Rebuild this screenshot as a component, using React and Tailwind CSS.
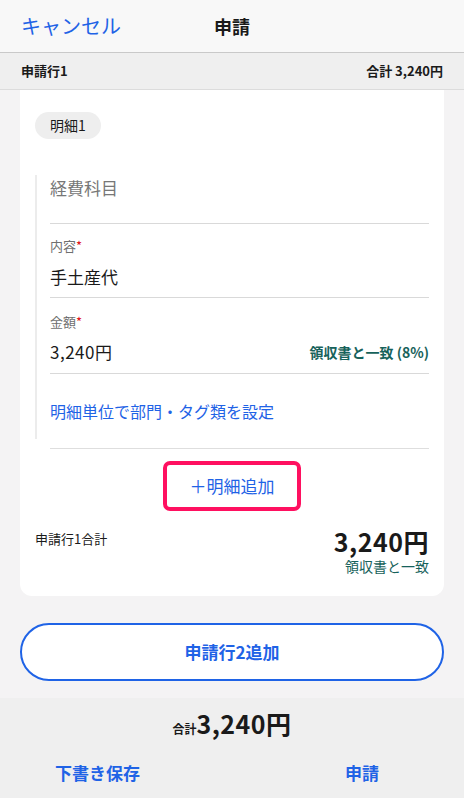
const FONT = { fontFamily: '"Noto Sans CJK JP", "Noto Sans", sans-serif' }

function Field({ label, required, children, className = "" }) {
  return (
    <div className={`border-b border-[#d9d9d9] ${className}`}>
      {label && (
        <p className="text-[13px] leading-none text-[#6f6f6f]">
          {label}
          {required && <span className="text-[#e0101a]">*</span>}
        </p>
      )}
      {children}
    </div>
  )
}

export default function App() {
  return (
    <div style={FONT} className="flex h-[798px] w-[464px] flex-col overflow-hidden bg-[#f4f3f4] text-[#1a1a1a]">
      <header className="relative flex h-[53px] shrink-0 items-center border-b border-[#c9c9c9] bg-[#f8f8f8] px-[21px]">
        <button type="button" className="text-[20px] text-[#1f63e6]">キャンセル</button>
        <h1 className="absolute left-1/2 -translate-x-1/2 text-[18px] font-bold">申請</h1>
      </header>

      <div className="flex h-[37px] shrink-0 items-center justify-between border-b border-[#dcdcdc] bg-[#efefef] px-[21px] text-[13px] font-bold">
        <span>申請行1</span>
        <span>合計 3,240円</span>
      </div>

      <div className="mx-[20px] shrink-0 rounded-b-[12px] bg-white pb-[20px] pl-[15px] pr-[15px] pt-[22px]">
        <span className="inline-flex h-[27px] items-center rounded-full bg-[#eeeeee] px-[15px] text-[14px]">明細1</span>

        <div className="mt-[36px] border-l-2 border-[#ececec] pl-[13px]">
          <Field className="h-[49px] pt-[1px]">
            <p className="text-[17px] leading-[24px] text-[#777777]">経費科目</p>
          </Field>
          <Field label="内容" required className="h-[74px] pt-[15px]">
            <p className="mt-[13px] text-[17px] leading-[24px]">手土産代</p>
          </Field>
          <Field label="金額" required className="h-[76px] pt-[17px]">
            <div className="mt-[12px] flex items-center justify-between">
              <p className="text-[17px] leading-[24px] tracking-[0.5px]">3,240円</p>
              <p className="text-[14px] font-bold text-[#17625b]">領収書と一致 (8%)</p>
            </div>
          </Field>
          <div className="h-[65px] pt-[25px]">
            <p className="text-[16px] leading-[24px] text-[#1f63e6]">明細単位で部門・タグ類を設定</p>
          </div>
        </div>
        <div className="ml-[15px] border-b border-[#dedede] pt-[9px]" />

        <div className="mt-[12px] flex justify-center">
          <button
            type="button"
            className="flex h-[50px] w-[138px] items-center justify-center rounded-[7px] border-4 border-[#ff1060] text-[17px] text-[#1f63e6]"
          >
            ＋明細追加
          </button>
        </div>

        <div className="mt-[17px] flex items-start justify-between">
          <span className="mt-[1px] text-[13px]">申請行1合計</span>
          <div className="flex flex-col items-end">
            <span className="text-[25px] font-bold leading-[26px] tracking-[0.5px]">3,240円</span>
            <span className="mt-[2px] text-[14px] leading-[20px] text-[#17625b]">領収書と一致</span>
          </div>
        </div>
      </div>

      <div className="mt-[27px] px-[20px]">
        <button
          type="button"
          className="flex h-[58px] w-full items-center justify-center rounded-full border-2 border-[#1f63e6] bg-white text-[17px] font-bold text-[#1f63e6]"
        >
          申請行2追加
        </button>
      </div>

      <footer className="mt-auto flex h-[100px] shrink-0 flex-col bg-[#efefef]">
        <div className="flex items-baseline justify-center pt-[10px]">
          <span className="text-[12px] font-bold">合計</span>
          <span className="text-[25px] font-bold leading-[30px] tracking-[0.5px]">3,240円</span>
        </div>
        <div className="mt-[22px] flex items-center justify-between pl-[55px] pr-[85px] text-[17px] font-bold text-[#1f63e6]">
          <button type="button">下書き保存</button>
          <button type="button">申請</button>
        </div>
      </footer>
    </div>
  )
}
